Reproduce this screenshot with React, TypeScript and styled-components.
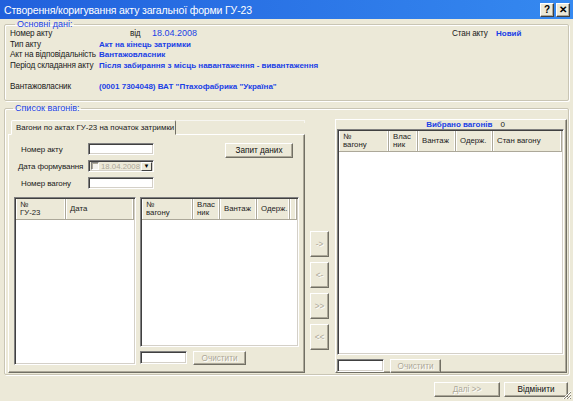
import React from 'react';
import styled, { createGlobalStyle } from 'styled-components';

const GlobalStyle = createGlobalStyle`
  html, body {
    margin: 0;
    padding: 0;
    background: #ece9d8;
  }
  body {
    font-family: "Liberation Sans", Arial, sans-serif;
    font-size: 8.2px;
    color: #1a1a1a;
  }
  * {
    box-sizing: border-box;
  }
`;

const blue = '#1a3fe6';
const face = '#ece9d8';

const Window = styled.div`
  position: relative;
  width: 573px;
  height: 401px;
  background: ${face};
  display: flex;
  flex-direction: column;
  overflow: hidden;
`;

const TitleBar = styled.div`
  height: 19px;
  flex: none;
  display: flex;
  align-items: center;
  gap: 2px;
  padding: 0 3px 0 4px;
  background: linear-gradient(to right, #2160dc, #3589f0);
  color: #fff;
`;

const Title = styled.span`
  flex: 1;
  font-size: 10.5px;
  letter-spacing: -0.15px;
`;

const CaptionButton = styled.div`
  width: 14px;
  height: 14px;
  display: flex;
  align-items: center;
  justify-content: center;
  background: ${face};
  border: 1px solid;
  border-color: #fff #404040 #404040 #fff;
  box-shadow: inset -1px -1px 0 #aca899;
  color: #000;
  font-weight: bold;
  font-size: 10px;
  line-height: 1;
`;

const Body = styled.div`
  flex: 1;
  display: flex;
  flex-direction: column;
  padding: 1px 4px 0 4px;
`;

const Group = styled.fieldset<{ $gap?: number }>`
  margin: ${p => p.$gap ?? 0}px 0 0;
  min-width: 0;
  border: 1px solid #c9c5b4;
  box-shadow: inset 1px 1px 0 #fff, 1px 1px 0 #fff;
  border-radius: 2px;
`;

const InfoGroup = styled(Group)`
  padding: 0 5px 8px 5px;
`;

const ListGroup = styled(Group)`
  padding: 7px 1px 1px 3px;
`;

const Legend = styled.legend`
  color: ${blue};
  font-size: 9px;
  line-height: 8px;
  padding: 0 2px;
  margin-left: 5px;
`;

const InfoRow = styled.div`
  height: 10.7px;
  display: flex;
  align-items: center;
  white-space: nowrap;
`;

const Label = styled.span<{ $w?: number }>`
  width: ${p => (p.$w ? `${p.$w}px` : 'auto')};
  flex: none;
  letter-spacing: -0.15px;
`;

const Value = styled.span<{ $w?: number; $bold?: boolean }>`
  width: ${p => (p.$w ? `${p.$w}px` : 'auto')};
  flex: none;
  color: ${blue};
  font-weight: ${p => (p.$bold ? 'bold' : 'normal')};
  font-size: ${p => (p.$bold ? '8px' : '9px')};
`;

const Content = styled.div`
  height: 254px;
  display: flex;
`;

const TabColumn = styled.div`
  width: 297px;
  flex: none;
  display: flex;
  flex-direction: column;
`;

const TabStrip = styled.div`
  height: 15px;
  display: flex;
  align-items: flex-end;
  padding-left: 3px;
`;

const Tab = styled.div`
  height: 15px;
  width: 165px;
  display: flex;
  align-items: center;
  padding-left: 4px;
  background: ${face};
  border: 1px solid;
  border-color: #fff #716f64 transparent #fff;
  border-radius: 2px 2px 0 0;
  margin-bottom: -1px;
  position: relative;
  z-index: 1;
  white-space: nowrap;
  font-size: 7.9px;
`;

const TabStripLine = styled.div`
  flex: 1;
  align-self: flex-start;
  height: 3px;
  margin-top: 1px;
  border-top: 1px solid #f7f6f1;
  border-right: 1px solid #f7f6f1;
`;

const TabPanel = styled.div`
  flex: 1;
  border: 1px solid;
  border-color: #fff #716f64 #716f64 #fff;
  box-shadow: inset -1px -1px 0 #aca899;
  padding: 8px 5px 0 5px;
  display: flex;
  flex-direction: column;
`;

const QueryArea = styled.div`
  display: flex;
  align-items: flex-start;
`;

const Fields = styled.div`
  display: flex;
  flex-direction: column;
  gap: 5px;
`;

const FieldRow = styled.div`
  height: 12px;
  display: flex;
  align-items: center;
`;

const FieldLabel = styled.span<{ $indent: number }>`
  width: 74px;
  padding-left: ${p => p.$indent}px;
  white-space: nowrap;
  font-size: 8px;
  letter-spacing: -0.1px;
`;

const Input = styled.div<{ $w: number; $h?: number }>`
  width: ${p => p.$w}px;
  height: ${p => p.$h ?? 12}px;
  flex: none;
  background: #fff;
  border: 1px solid;
  border-color: #808080 #fff #fff #808080;
  box-shadow: inset 1px 1px 0 #404040, inset -1px -1px 0 #d4d0c8;
`;

const DateBox = styled(Input)`
  display: flex;
  align-items: center;
  padding: 0 1px 0 2px;
  background: ${face};
  color: #aca899;
  font-size: 7.8px;
  white-space: nowrap;
`;

const CheckBox = styled.span`
  width: 8px;
  height: 8px;
  flex: none;
  margin-right: 2px;
  background: #f4f3ee;
  border: 1px solid;
  border-color: #808080 #fff #fff #808080;
  box-shadow: inset 1px 1px 0 #aca899;
`;

const DropButton = styled.span`
  margin-left: auto;
  width: 11px;
  height: 9px;
  flex: none;
  display: flex;
  align-items: center;
  justify-content: center;
  background: ${face};
  border: 1px solid;
  border-color: #fff #404040 #404040 #fff;
  color: #000;
  font-size: 6px;
`;

const Button = styled.div<{ $w: number; $h: number; $disabled?: boolean }>`
  width: ${p => p.$w}px;
  height: ${p => p.$h}px;
  flex: none;
  display: flex;
  align-items: center;
  justify-content: center;
  background: ${face};
  border: 1px solid;
  border-color: #fff #716f64 #716f64 #fff;
  box-shadow: inset -1px -1px 0 #aca899;
  font-size: 8.2px;
  color: ${p => (p.$disabled ? '#aca899' : '#111')};
  text-shadow: ${p => (p.$disabled ? '1px 1px 0 #fff' : 'none')};
  white-space: nowrap;
`;

const QueryButton = styled(Button)`
  margin-left: 71px;
`;

const Lists = styled.div`
  margin-top: 8px;
  display: flex;
  gap: 4px;
  align-items: flex-start;
`;

const ListBox = styled.div<{ $w: number | string; $h: number }>`
  width: ${p => (typeof p.$w === 'number' ? `${p.$w}px` : p.$w)};
  height: ${p => p.$h}px;
  flex: none;
  background: #fff;
  border: 1px solid;
  border-color: #808080 #fff #fff #808080;
  box-shadow: inset 1px 1px 0 #404040, inset -1px -1px 0 #d4d0c8;
  padding: 1px 1px 0 1px;
`;

const Header = styled.div<{ $cols: string; $h: number }>`
  height: ${p => p.$h}px;
  display: grid;
  grid-template-columns: ${p => p.$cols};
  background: ${face};
  border-bottom: 1px solid #aca899;
`;

const HeaderCell = styled.div`
  display: flex;
  align-items: center;
  padding-left: 4px;
  font-size: 7.8px;
  line-height: 8.5px;
  color: #222;
  border-right: 1px solid #aca899;
  box-shadow: inset -1px 0 0 #fff, inset 1px 0 0 #fff;
  white-space: pre;
`;

const ListColumn = styled.div`
  display: flex;
  flex-direction: column;
`;

const ClearRow = styled.div<{ $gap: number }>`
  margin-top: 4px;
  display: flex;
  gap: ${p => p.$gap}px;
`;

const MoveColumn = styled.div`
  width: 30px;
  flex: none;
  padding: 112px 0 0 5px;
  display: flex;
  flex-direction: column;
  gap: 5px;
`;

const SelectedPanel = styled.div`
  flex: 1;
  border: 1px solid;
  border-color: #fff #716f64 #716f64 #fff;
  box-shadow: inset -1px -1px 0 #aca899;
  padding: 0 2px 0 1px;
  display: flex;
  flex-direction: column;
`;

const SelectedTitle = styled.div`
  height: 10px;
  display: flex;
  align-items: center;
  justify-content: center;
  gap: 8px;
  font-size: 8px;
  margin-left: 30px;
`;

const BlueBold = styled.span`
  color: ${blue};
  font-weight: bold;
`;

const Footer = styled.div`
  margin-top: 7px;
  display: flex;
  justify-content: flex-end;
  gap: 4px;
  padding-right: 1px;
`;

const Grip = styled.svg`
  position: absolute;
  right: 1px;
  bottom: 1px;
`;

const leftCols = '50px 1fr';
const rightCols = '51px 27px 37px 33px 1fr';
const selectedCols = '50px 29px 38px 37px 1fr';

export default function App() {
  return (
    <>
      <GlobalStyle />
      <Window>
        <TitleBar>
          <Title>Створення/коригування акту загальної форми ГУ-23</Title>
          <CaptionButton>?</CaptionButton>
          <CaptionButton>✕</CaptionButton>
        </TitleBar>
        <Body>
          <InfoGroup>
            <Legend>Основні дані:</Legend>
            <InfoRow>
              <Label $w={89}>Номер акту</Label>
              <Label $w={31} />
              <Label $w={22}>від</Label>
              <Value $w={300}>18.04.2008</Value>
              <Label $w={44}>Стан акту</Label>
              <Value $bold>Новий</Value>
            </InfoRow>
            <InfoRow>
              <Label $w={89}>Тип акту</Label>
              <Value $bold>Акт на кінець затримки</Value>
            </InfoRow>
            <InfoRow>
              <Label $w={89}>Акт на відповідальність</Label>
              <Value $bold>Вантажовласник</Value>
            </InfoRow>
            <InfoRow>
              <Label $w={89}>Період складання акту</Label>
              <Value $bold>Після забирання з місць навантаження - вивантаження</Value>
            </InfoRow>
            <InfoRow />
            <InfoRow>
              <Label $w={89}>Вантажовласник</Label>
              <Value $bold>(0001 7304048) ВАТ "Птахофабрика "Україна"</Value>
            </InfoRow>
          </InfoGroup>

          <ListGroup $gap={3}>
            <Legend>Список вагонів:</Legend>
            <Content>
              <TabColumn>
                <TabStrip>
                  <Tab>Вагони по актах ГУ-23 на початок затримки</Tab>
                  <TabStripLine />
                </TabStrip>
                <TabPanel>
                  <QueryArea>
                    <Fields>
                      <FieldRow>
                        <FieldLabel $indent={7}>Номер акту</FieldLabel>
                        <Input $w={66} />
                      </FieldRow>
                      <FieldRow>
                        <FieldLabel $indent={4}>Дата формування</FieldLabel>
                        <DateBox $w={66}>
                          <CheckBox />
                          18.04.2008
                          <DropButton>▼</DropButton>
                        </DateBox>
                      </FieldRow>
                      <FieldRow>
                        <FieldLabel $indent={7}>Номер вагону</FieldLabel>
                        <Input $w={66} />
                      </FieldRow>
                    </Fields>
                    <QueryButton $w={68} $h={15}>Запит даних</QueryButton>
                  </QueryArea>
                  <Lists>
                    <ListBox $w={122} $h={168}>
                      <Header $cols={leftCols} $h={21}>
                        <HeaderCell>{'№\nГУ-23'}</HeaderCell>
                        <HeaderCell>Дата</HeaderCell>
                      </Header>
                    </ListBox>
                    <ListColumn>
                      <ListBox $w={159} $h={150}>
                        <Header $cols={rightCols} $h={21}>
                          <HeaderCell>{'№\nвагону'}</HeaderCell>
                          <HeaderCell>{'Влас\nник'}</HeaderCell>
                          <HeaderCell>Вантаж</HeaderCell>
                          <HeaderCell>Одерж.</HeaderCell>
                          <HeaderCell />
                        </Header>
                      </ListBox>
                      <ClearRow $gap={6}>
                        <Input $w={47} $h={13} />
                        <Button $w={53} $h={14} $disabled>Очистити</Button>
                      </ClearRow>
                    </ListColumn>
                  </Lists>
                </TabPanel>
              </TabColumn>

              <MoveColumn>
                <Button $w={19} $h={26} $disabled>-&gt;</Button>
                <Button $w={19} $h={26} $disabled>&lt;-</Button>
                <Button $w={19} $h={26} $disabled>&gt;&gt;</Button>
                <Button $w={19} $h={26} $disabled>&lt;&lt;</Button>
              </MoveColumn>

              <SelectedPanel>
                <SelectedTitle>
                  <BlueBold>Вибрано вагонів</BlueBold>
                  <span>0</span>
                </SelectedTitle>
                <ListBox $w="100%" $h={226}>
                  <Header $cols={selectedCols} $h={21}>
                    <HeaderCell>{'№\nвагону'}</HeaderCell>
                    <HeaderCell>{'Влас\nник'}</HeaderCell>
                    <HeaderCell>Вантаж</HeaderCell>
                    <HeaderCell>Одерж.</HeaderCell>
                    <HeaderCell>Стан вагону</HeaderCell>
                  </Header>
                </ListBox>
                <ClearRow $gap={6}>
                  <Input $w={47} $h={13} />
                  <Button $w={51} $h={14} $disabled>Очистити</Button>
                </ClearRow>
              </SelectedPanel>
            </Content>
          </ListGroup>

          <Footer>
            <Button $w={66} $h={15} $disabled>Далі &gt;&gt;</Button>
            <Button $w={64} $h={15}>Відмінити</Button>
          </Footer>
        </Body>
        <Grip width="11" height="11" viewBox="0 0 11 11">
          <path d="M10 2 L2 10 M10 5 L5 10 M10 8 L8 10" stroke="#fff" strokeWidth="1" />
          <path d="M10 3 L3 10 M10 6 L6 10 M10 9 L9 10" stroke="#8a8778" strokeWidth="1" />
        </Grip>
      </Window>
    </>
  );
}
